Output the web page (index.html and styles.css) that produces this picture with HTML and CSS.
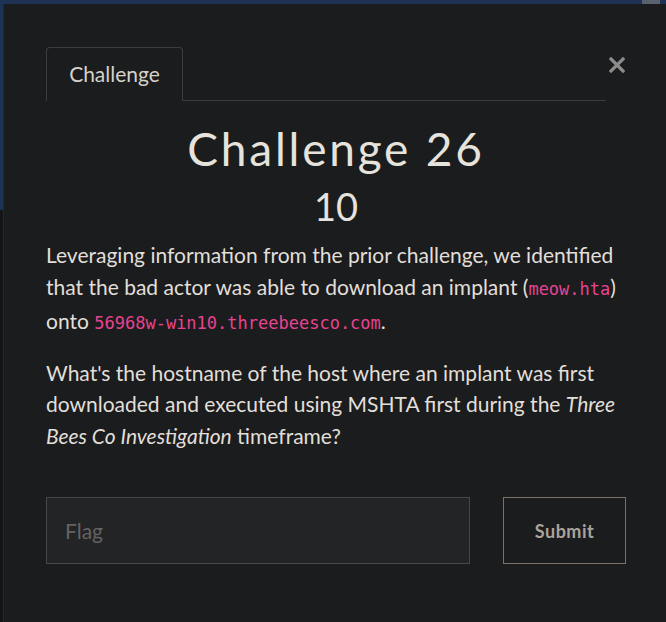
FILE: index.html
```html
<!DOCTYPE html>
<html>
<head>
<meta charset="utf-8">
<link rel="stylesheet" href="styles.css">
</head>
<body>
<div class="backdrop-blob"></div>
<div class="modal">
  <div class="header">
    <ul class="tabs">
      <li class="tab">Challenge</li>
    </ul>
    <button class="close" aria-label="Close">
      <svg width="16" height="16" viewBox="0 0 16 16"><path d="M2 2 L14 14 M14 2 L2 14" stroke="#8c8c8c" stroke-width="3.2" stroke-linecap="square"/></svg>
    </button>
  </div>
  <h2 class="title">Challenge 26</h2>
  <h3 class="value">10</h3>
  <div class="desc">
    <p>Leveraging information from the prior challenge, we identified that the bad actor was able to download an implant (<code>meow.hta</code>) onto <code>56968w-win10.threebeesco.com</code>.</p>
    <p>What's the hostname of the host where an implant was first downloaded and executed using MSHTA first during the <em>Three Bees Co Investigation</em> timeframe?</p>
  </div>
  <form class="flag-row">
    <input class="flag-input" type="text" placeholder="Flag">
    <button class="submit" type="button">Submit</button>
  </form>
</div>
</body>
</html>
```
FILE: styles.css
```css
html, body {
  margin: 0;
  padding: 0;
  height: 100%;
  overflow: hidden;
}
body {
  background: linear-gradient(to bottom, #1e3256 0, #1e3256 210px, #131416 210px);
  font-family: "Lato", "Liberation Sans", sans-serif;
  position: relative;
}
.backdrop-blob {
  position: absolute;
  top: 0;
  left: 642px;
  width: 18px;
  height: 4px;
  background: #5a6272;
}
.modal {
  position: absolute;
  top: 4px;
  left: 3px;
  right: -20px;
  bottom: -20px;
  background: #1b1c1e;
  border-left: 1px solid #25272a;
  padding: 43px 0 0 42px;
  box-sizing: border-box;
  color: #e2dfd9;
}
.header {
  display: flex;
  align-items: flex-start;
  width: 580px;
}
.tabs {
  list-style: none;
  margin: 0;
  padding: 0;
  width: 560px;
  border-bottom: 1px solid #3c3d40;
  display: flex;
}
.tab {
  width: 137px;
  height: 54px;
  box-sizing: border-box;
  border: 1px solid #3c3d40;
  border-bottom: none;
  border-radius: 4px 4px 0 0;
  margin-bottom: -1px;
  background: #1b1c1e;
  display: flex;
  align-items: center;
  justify-content: center;
  font-size: 21px;
  color: #d6d2ca;
  padding-bottom: 2px;
}
.close {
  background: none;
  border: none;
  padding: 0;
  margin: 10px 0 0 3px;
  width: 16px;
  height: 16px;
  display: block;
}
.close svg { display: block; }
.title {
  width: 580px;
  text-align: center;
  margin: 21px 0 0 0;
  font-family: "Lato", sans-serif;
  font-weight: 400;
  font-size: 46px;
  letter-spacing: 2.8px;
  line-height: 54px;
  color: #e6e3dd;
}
.value {
  width: 580px;
  text-align: center;
  margin: 4px 0 0 0;
  font-weight: 400;
  font-size: 38px;
  line-height: 52px;
  color: #e6e3dd;
}
.desc {
  width: 580px;
  margin-top: 7px;
}
.desc p {
  margin: 0 0 17px 0;
  font-size: 21px;
  line-height: 31.5px;
}
.desc code {
  font-family: "DejaVu Sans Mono", "Liberation Mono", monospace;
  font-size: 17px;
  color: #e8438f;
}
.flag-row {
  display: flex;
  gap: 33px;
  margin-top: 46px;
  width: 580px;
}
.flag-input {
  width: 424px;
  height: 67px;
  box-sizing: border-box;
  background: #232426;
  border: 1px solid #46474a;
  padding: 0 18px;
  font-family: "Lato", sans-serif;
  font-size: 21px;
  color: #ddd;
  outline: none;
}
.flag-input::placeholder { color: #636363; }
.submit {
  width: 123px;
  height: 67px;
  box-sizing: border-box;
  background: #1b1c1e;
  border: 1px solid #7d7166;
  font-family: "Lato", sans-serif;
  font-weight: 700;
  font-size: 18px;
  letter-spacing: 0.5px;
  color: #aaa49b;
}
```
